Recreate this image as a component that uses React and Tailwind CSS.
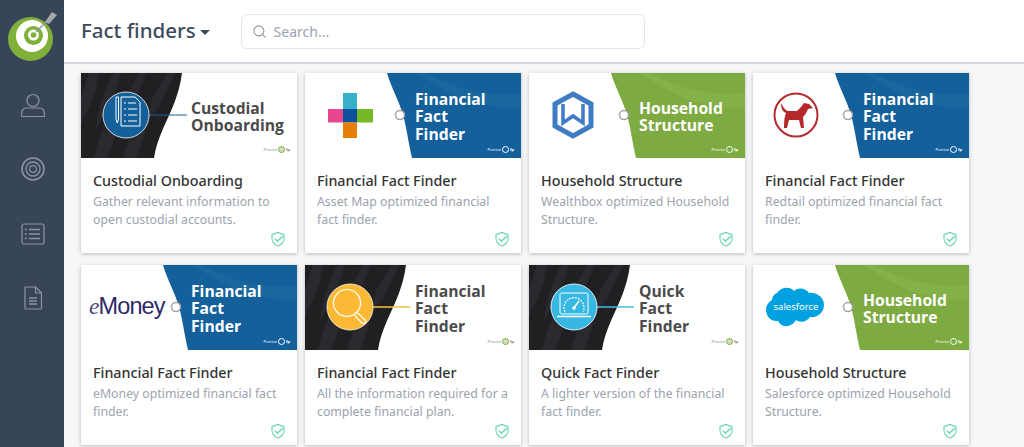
import { Search } from "lucide-react";

const FONT = { fontFamily: '"Noto Sans", "Open Sans", sans-serif' };
const BANNER_FONT = { fontFamily: '"Open Sans", "Noto Sans", sans-serif' };

const cards = [
  { variant: "dark", logo: "list", lines: ["Custodial", "Onboarding"], title: "Custodial Onboarding", desc: "Gather relevant information to open custodial accounts." },
  { variant: "blue", logo: "assetmap", lines: ["Financial", "Fact", "Finder"], title: "Financial Fact Finder", desc: "Asset Map optimized financial fact finder." },
  { variant: "green", logo: "wealthbox", lines: ["Household", "Structure"], title: "Household Structure", desc: "Wealthbox optimized Household Structure." },
  { variant: "blue", logo: "redtail", lines: ["Financial", "Fact", "Finder"], title: "Financial Fact Finder", desc: "Redtail optimized financial fact finder." },
  { variant: "blue", logo: "emoney", lines: ["Financial", "Fact", "Finder"], title: "Financial Fact Finder", desc: "eMoney optimized financial fact finder." },
  { variant: "dark", logo: "search", lines: ["Financial", "Fact", "Finder"], title: "Financial Fact Finder", desc: "All the information required for a complete financial plan." },
  { variant: "dark", logo: "gauge", lines: ["Quick", "Fact", "Finder"], title: "Quick Fact Finder", desc: "A lighter version of the financial fact finder." },
  { variant: "green", logo: "salesforce", lines: ["Household", "Structure"], title: "Household Structure", desc: "Salesforce optimized Household Structure." },
];

function TargetLogo() {
  return (
    <svg width="64" height="64" viewBox="0 0 64 64" className="shrink-0">
      <ellipse cx="30.500" cy="39" rx="22.500" ry="22" fill="#7fb03a" />
      <circle cx="32" cy="36" r="16" fill="#fff" />
      <circle cx="33.500" cy="35.500" r="9.500" fill="#7fb03a" />
      <circle cx="33.500" cy="35" r="5.500" fill="#fff" />
      <circle cx="33.500" cy="35" r="2.800" fill="#7fb03a" />
      <path d="M36 32L48 20" stroke="#8d9399" strokeWidth="1.200" />
      <path d="M45 22L52 12L57 15L49 24Z" fill="#a3a8ad" />
    </svg>
  );
}

function UserIcon() {
  return (
    <svg width="24" height="25" viewBox="0 0 24 25" fill="none" stroke="#8b95a2" strokeWidth="1.200">
      <circle cx="12" cy="7.500" r="6" />
      <path d="M5 15h14c2.300 0 4.300 2.300 4.300 5v3.500H.7V20c0-2.700 2-5 4.300-5z" strokeLinejoin="round" />
    </svg>
  );
}

function GoalIcon() {
  return (
    <svg width="24" height="24" viewBox="0 0 24 24" fill="none" stroke="#8b95a2">
      <circle cx="12" cy="12" r="11" strokeWidth="1.600" />
      <circle cx="12" cy="12" r="7" strokeWidth="1.300" />
      <circle cx="12" cy="12" r="3.400" strokeWidth="1.200" />
    </svg>
  );
}

function ListIcon() {
  return (
    <svg width="24" height="22" viewBox="0 0 24 22" fill="none" stroke="#8b95a2" strokeWidth="1.200">
      <rect x="1" y="1" width="22" height="20" rx="2" />
      <path d="M8 6.500h11M8 11h11M8 15.500h11" strokeWidth="1.400" />
      <circle cx="4.800" cy="6.500" r="1" fill="#8b95a2" stroke="none" />
      <circle cx="4.800" cy="11" r="1" fill="#8b95a2" stroke="none" />
      <circle cx="4.800" cy="15.500" r="1" fill="#8b95a2" stroke="none" />
    </svg>
  );
}

function DocIcon() {
  return (
    <svg width="20" height="24" viewBox="0 0 20 24" fill="none" stroke="#8b95a2" strokeWidth="1.200">
      <path d="M3 1h9.500L18.500 7v15a1 1 0 0 1-1 1H3a1 1 0 0 1-1-1V2a1 1 0 0 1 1-1z" strokeLinejoin="round" />
      <path d="M12.500 1v6h6" />
      <path d="M6 12h8M6 15h8M6 18h8" strokeWidth="1.400" />
    </svg>
  );
}

function ShieldIcon() {
  return (
    <svg width="16" height="16" viewBox="0 0 16 16" fill="none" stroke="#62d6ae" strokeWidth="1.100" strokeLinejoin="round" strokeLinecap="round">
      <path d="M8 1.200C9.800 2.400 11.500 3 14 3.200V8c0 3.200-2.600 5.500-6 7C4.600 13.500 2 11.200 2 8V3.200C4.500 3 6.200 2.400 8 1.200z" />
      <path d="M5 7.800l2.400 2.400L13 5.300" strokeWidth="1.200" />
    </svg>
  );
}

function BannerBackground({ variant }) {
  if (variant === "dark") {
    return (
      <>
        <path d="M0 0H101C99 14 96 24 90 38C84 52 76 66 73 85H0Z" fill="#202023" />
        <g fill="#2a2a2e">
          <path d="M8 0L0 24V52L14 20L18 0Z" />
          <path d="M32 0L20 28L14 58L30 30L40 0Z" />
          <path d="M58 0L46 22L38 54L54 28L66 0Z" />
          <path d="M86 0L72 24L64 52L80 30L94 0Z" />
          <path d="M26 44L12 85H26L36 58Z" />
          <path d="M56 40L42 85H56L66 52Z" />
        </g>
      </>
    );
  }
  const fill = variant === "blue" ? "#14609a" : "#7dab42";
  const wave = variant === "blue" ? "#1a67a0" : "#84b149";
  return (
    <>
      <path d="M82 0C86 14 94 28 98 42C102 56 103 68 107 85H216V0Z" fill={fill} />
      <path d="M120 0C150 16 185 24 216 20V34C180 38 145 24 112 0Z" fill={wave} />
      <circle cx="95" cy="42" r="4.500" fill="#fff" stroke="#a3a3a3" strokeWidth="1.500" />
    </>
  );
}

function BannerLogo({ logo }) {
  switch (logo) {
    case "list":
      return (
        <>
          <path d="M68 42H106" stroke="#14609a" strokeWidth="1" />
          <circle cx="45" cy="42" r="23" fill="#14609a" stroke="#d5d9dd" strokeWidth="1" />
          <path d="M35 24h2.500v22l-1.200 4l-1.300-4z" fill="none" stroke="#fff" strokeWidth="1" />
          <path d="M40 24H54L59 29V53H40Z" fill="none" stroke="#fff" strokeWidth="1" />
          <path d="M43 30h2M47 30h8M43 36h2M47 36h9M43 42h2M47 42h9M43 48h2M47 48h9" stroke="#fff" strokeWidth="1.200" />
        </>
      );
    case "search":
      return (
        <>
          <path d="M68 42H105" stroke="#f9c042" strokeWidth="1.500" />
          <circle cx="45" cy="42" r="23" fill="#fbb936" stroke="#f3e7c7" strokeWidth="1" />
          <circle cx="42" cy="38" r="13.500" fill="none" stroke="#fff" strokeWidth="1.200" />
          <path d="M52 48l2 1l6 6a2 2 0 0 1-3 3l-6-6l-1-2" fill="none" stroke="#fff" strokeWidth="1.200" />
        </>
      );
    case "gauge":
      return (
        <>
          <path d="M68 42H105" stroke="#48bde4" strokeWidth="1.500" />
          <circle cx="45" cy="42" r="23" fill="#36b8e2" stroke="#dff3fa" strokeWidth="1" />
          <rect x="31" y="28" width="28" height="21" rx="1.500" fill="none" stroke="#fff" strokeWidth="1" />
          <path d="M28 51.500H62" stroke="#fff" strokeWidth="1.500" />
          <path d="M36 47a10 10 0 1 1 18 0" fill="none" stroke="#fff" strokeWidth="1.200" strokeDasharray="2 1" />
          <path d="M45 43L50 36" stroke="#fff" strokeWidth="1.500" />
          <circle cx="45" cy="43" r="1.800" fill="#fff" />
        </>
      );
    case "assetmap":
      return (
        <>
          <rect x="38" y="20" width="14" height="16" fill="#36b0c9" />
          <rect x="23" y="36" width="15" height="13.500" fill="#e8458f" />
          <rect x="38" y="36" width="14" height="13.500" fill="#0c4f9c" />
          <rect x="52" y="36" width="16" height="13.500" fill="#74ba26" />
          <rect x="38" y="49.500" width="14" height="15.500" fill="#e67e06" />
        </>
      );
    case "wealthbox":
      return (
        <>
          <path d="M44 21L62 31V53L44 63L26 53V31Z" fill="none" stroke="#3f7cc4" strokeWidth="5" strokeLinejoin="miter" />
          <path d="M34 31V50L44 43L54 50V31" fill="none" stroke="#3f7cc4" strokeWidth="3.500" />
        </>
      );
    case "redtail":
      return (
        <>
          <circle cx="43" cy="42" r="21.500" fill="none" stroke="#b5292c" strokeWidth="2" />
          <path d="M28 30C28 36 30 39 33 40C31 45 31 50 31 55H34L36 47H46L48 55H51L50 44C53 41 54 38 55 36L60 35L56 31L51 30L48 34L44 38H35C32 37 30 34 28 30Z" fill="#b5292c" />
        </>
      );
    case "emoney":
      return (
        <text x="8" y="49" fontSize="23.500" fill="#2b2a66" letterSpacing="-0.900" style={{ fontFamily: '"Liberation Sans", sans-serif' }}>
          <tspan fontStyle="italic" style={{ fontFamily: '"Liberation Serif", serif' }} fill="#4a4a7c">e</tspan>Money
        </text>
      );
    case "salesforce":
      return (
        <>
          <path d="M24 28C28 22 37 21 41 26C45 22 53 23 56 28C63 27 71 32 71 40C71 48 64 53 57 52C54 57 47 58 43 55C39 62 29 64 25 56C18 57 13 51 13 45C13 40 16 37 19 35C19 32 21 29 24 28Z" fill="#00a1e0" />
          <text x="43" y="45" textAnchor="middle" fontSize="9.500" fill="#fff">
            salesforce
          </text>
        </>
      );
    default:
      return null;
  }
}

function Banner({ variant, logo, lines }) {
  const isDark = variant === "dark";
  return (
    <div className="relative h-[85px] shrink-0 overflow-hidden bg-white">
      <svg width="216" height="85" viewBox="0 0 216 85" className="absolute inset-0">
        <BannerBackground variant={variant} />
        <BannerLogo logo={logo} />
      </svg>
      <div
        className={`absolute left-[110px] top-1/2 mt-px -translate-y-1/2 text-[15.700px] font-bold leading-[17.500px] ${isDark ? "text-[#4a4a4a]" : "text-white"}`}
        style={BANNER_FONT}
      >
        {lines.map((line, i) => (
          <span key={line}>
            {i > 0 && <br />}
            {line}
          </span>
        ))}
      </div>
      <div className={`absolute bottom-[5px] right-[7px] flex items-center gap-px text-[4px] leading-none ${isDark ? "text-[#8a8a8a]" : "text-white"}`}>
        Precise
        <span className={`h-[7px] w-[7px] rounded-full border ${isDark ? "border-[#7dab42] bg-[#cfe0b5]" : "border-white"}`} />
        <span className="font-bold">fp</span>
      </div>
    </div>
  );
}

function Card({ card }) {
  return (
    <div className="flex h-[180px] flex-col bg-white shadow-[0_1px_4px_rgba(0,0,0,0.25)]">
      <Banner variant={card.variant} logo={card.logo} lines={card.lines} />
      <div className="pl-3 pr-2 pt-[13px]">
        <h3 className="text-[14.300px] font-medium leading-5 text-[#333]">{card.title}</h3>
        <p className="mt-0.5 text-[12.300px] leading-[18px] text-[#9ca3af]">{card.desc}</p>
      </div>
      <div className="mb-[6px] mr-[11px] mt-auto self-end">
        <ShieldIcon />
      </div>
    </div>
  );
}

export default function App() {
  return (
    <div className="flex h-screen overflow-hidden bg-[#f6f7f9]" style={FONT}>
      <aside className="flex w-[64px] shrink-0 flex-col items-center bg-[#384559]">
        <TargetLogo />
        <div className="flex flex-col items-center pl-[2px]">
          <div className="mt-[28px] flex h-[26px] items-center"><UserIcon /></div>
          <div className="mt-[38px] flex h-[26px] items-center"><GoalIcon /></div>
          <div className="mt-[39px] flex h-[26px] items-center"><ListIcon /></div>
          <div className="mt-[38px] flex h-[26px] items-center"><DocIcon /></div>
        </div>
      </aside>
      <main className="min-w-0 flex-1">
        <header className="flex h-[64px] items-center border-b-2 border-[#d3d8e0] bg-white pl-[17px]">
          <h1 className="-mt-0.5 text-[20.500px] font-medium text-[#3d4a5c]">Fact finders</h1>
          <span className="ml-1 mt-0.5 h-0 w-0 border-x-[5px] border-t-[5px] border-x-transparent border-t-[#3d4a5c]" />
          <div className="ml-[31px] mt-px flex h-[35px] w-[404px] items-center gap-[7px] rounded-md border border-[#e2e6ec] bg-white pl-[10px]">
            <Search size={15} className="text-[#8b93a0]" strokeWidth={1.700} />
            <span className="text-[14px] text-[#9ca3af]">Search...</span>
          </div>
        </header>
        <div className="grid grid-cols-[repeat(4,216px)] gap-x-2 gap-y-3 pl-[17px] pt-[9px]">
          {cards.map((card) => (
            <Card key={card.logo} card={card} />
          ))}
        </div>
      </main>
    </div>
  );
}
